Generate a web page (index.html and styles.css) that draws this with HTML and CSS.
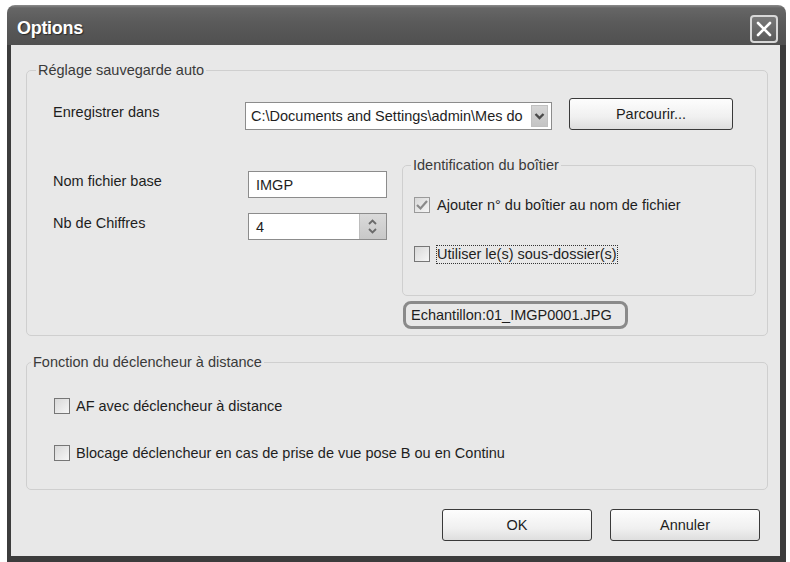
FILE: index.html
```html
<!DOCTYPE html>
<html lang="fr">
<head>
    <meta charset="UTF-8">
    <title>Options</title>
    <link rel="stylesheet" href="styles.css">
</head>
<body>
    <div class="window">
        <div class="titlebar">
            <span class="title">Options</span>
            <span class="close-btn">
                <svg width="20" height="20" viewBox="0 0 20 20"><path d="M4 4 L16 16 M16 4 L4 16" stroke="#fff" stroke-width="2.6" stroke-linecap="round"/></svg>
            </span>
        </div>

        <div class="client">
            <fieldset class="group group-save">
                <legend>Réglage sauvegarde auto</legend>
                <div class="save-body">
                    <div class="row-path">
                        <span class="lbl lbl-path">Enregistrer dans</span>
                        <div class="combo">
                            <span class="combo-text">C:\Documents and Settings\admin\Mes do</span>
                            <span class="combo-arrow">
                                <svg width="15" height="20" viewBox="0 0 15 20"><path d="M3.5 8 L7.5 12 L11.5 8" fill="none" stroke="#4a4a4a" stroke-width="2.4"/></svg>
                            </span>
                        </div>
                        <span class="btn btn-browse">Parcourir...</span>
                    </div>

                    <div class="row-split">
                        <div class="file-col">
                            <div class="field-row">
                                <span class="lbl lbl-field">Nom fichier base</span>
                                <div class="textbox">IMGP</div>
                            </div>
                            <div class="field-row">
                                <span class="lbl lbl-field">Nb de Chiffres</span>
                                <div class="textbox spin">
                                    <span class="spin-val">4</span>
                                    <span class="spin-btn">
                                        <svg width="25" height="25" viewBox="0 0 25 25"><path d="M9 10 L12.5 6.5 L16 10 M9 15 L12.5 18.5 L16 15" fill="none" stroke="#6a6a6a" stroke-width="1.8"/></svg>
                                    </span>
                                </div>
                            </div>
                        </div>

                        <div class="body-col">
                            <fieldset class="group group-body">
                                <legend>Identification du boîtier</legend>
                                <div class="body-checks">
                                    <div class="check-row">
                                        <span class="check checked">
                                            <svg width="14" height="14" viewBox="0 0 14 14"><path d="M2 7 L5.5 10.5 L12 3" fill="none" stroke="#8a8a8a" stroke-width="2.2"/></svg>
                                        </span>
                                        <span>Ajouter n° du boîtier au nom de fichier</span>
                                    </div>
                                    <div class="check-row row-sub">
                                        <span class="check"></span>
                                        <span class="focus">Utiliser le(s) sous-dossier(s)</span>
                                    </div>
                                </div>
                            </fieldset>
                            <div class="sample">Echantillon:01_IMGP0001.JPG</div>
                        </div>
                    </div>
                </div>
            </fieldset>

            <fieldset class="group group-remote">
                <legend>Fonction du déclencheur à distance</legend>
                <div class="remote-body">
                    <div class="check-row">
                        <span class="check"></span>
                        <span>AF avec déclencheur à distance</span>
                    </div>
                    <div class="check-row row-lock">
                        <span class="check"></span>
                        <span>Blocage déclencheur en cas de prise de vue pose B ou en Continu</span>
                    </div>
                </div>
            </fieldset>

            <div class="actions">
                <span class="btn btn-ok">OK</span>
                <span class="btn btn-cancel">Annuler</span>
            </div>
        </div>
    </div>
</body>
</html>
```

FILE: styles.css
```css
body {
    margin: 0;
    background: #fff;
    font-family: "Liberation Sans", Arial, sans-serif;
    font-size: 14.5px;
    color: #1e1e1e;
}
.window {
    margin: 5px 0 0 7px;
    width: 779px;
}
.titlebar {
    height: 40px;
    box-sizing: border-box;
    padding: 0 8px 0 10px;
    display: flex;
    justify-content: space-between;
    align-items: center;
    border-radius: 8px 8px 0 0;
    background: linear-gradient(#8c8c8c 0, #666 3px, #5a5a5a 45%, #505050 100%);
}
.title {
    color: #fff;
    font-weight: bold;
    font-size: 18px;
    letter-spacing: -0.3px;
    text-shadow: 1px 1px 1px #2a2a2a;
    margin-top: 6px;
}
.close-btn {
    width: 28px;
    height: 28px;
    box-sizing: border-box;
    margin-top: 8px;
    border: 2px solid #d8d8d8;
    border-radius: 4px;
    background: linear-gradient(#7a7a7a, #5a5a5a);
    display: flex;
    align-items: center;
    justify-content: center;
}
.client {
    background: #e8e8e8;
    border: 6px solid #3c3c3c;
    border-left-width: 4px;
    border-top: 0;
    padding: 17px 12px 15px 15px;
}
.group {
    margin: 0;
    padding: 0;
    border: 1px solid #cfcfcf;
    border-radius: 5px;
}
.group legend {
    padding: 0 2px;
    line-height: 16px;
    color: #3a3a3a;
}
.group-save legend {
    margin-left: 9px;
}
.save-body {
    padding: 20px 11px 6px 26px;
}
.row-path {
    display: flex;
    align-items: flex-end;
    height: 32px;
}
.lbl-path {
    width: 192px;
    align-self: center;
    margin-top: -4px;
}
.combo {
    width: 307px;
    height: 28px;
    box-sizing: border-box;
    border: 1px solid #8c8c8c;
    background: #fff;
    display: flex;
    align-items: center;
    justify-content: space-between;
    padding: 0 3px 0 5px;
}
.combo-arrow {
    width: 17px;
    height: 22px;
    background: linear-gradient(#d6d6d6, #c4c4c4);
    border: 1px solid #c0c0c0;
    box-sizing: border-box;
    display: flex;
    align-items: center;
    justify-content: center;
}
.btn {
    height: 32px;
    box-sizing: border-box;
    border: 1px solid #3a3a3a;
    border-radius: 3px;
    background: linear-gradient(#fdfdfd, #f0f0f0 60%, #dedede);
    display: flex;
    align-items: center;
    justify-content: center;
}
.btn-browse {
    width: 164px;
    margin-left: 17px;
}
.row-split {
    display: flex;
    align-items: flex-start;
    gap: 15px;
    margin-top: 27px;
}
.file-col {
    width: 334px;
    padding-top: 14px;
    display: flex;
    flex-direction: column;
    gap: 15px;
}
.field-row {
    display: flex;
    align-items: flex-start;
}
.lbl-field {
    width: 195px;
    line-height: 18px;
    padding-top: 1px;
}
.textbox {
    width: 139px;
    height: 27px;
    box-sizing: border-box;
    border: 1px solid #8c8c8c;
    background: #fff;
    padding: 0 7px;
    display: flex;
    align-items: center;
}
.spin {
    padding-right: 0;
    justify-content: space-between;
}
.spin-btn {
    width: 27px;
    height: 25px;
    background: linear-gradient(#dadada, #c8c8c8);
    border-left: 1px solid #bdbdbd;
    box-sizing: border-box;
}
.body-col {
    width: 354px;
}
.group-body legend {
    margin-left: 8px;
}
.body-checks {
    padding: 22px 8px 31px 11px;
}
.check-row {
    display: flex;
    align-items: center;
    height: 20px;
    gap: 7px;
}
.row-sub {
    margin-top: 29px;
}
.check {
    width: 16px;
    height: 16px;
    box-sizing: border-box;
    border: 1px solid #767676;
    background: linear-gradient(135deg, #d8d8d8, #f6f6f6);
    display: flex;
    align-items: center;
    justify-content: center;
    flex-shrink: 0;
}
.check.checked {
    border-color: #9a9a9a;
}
.focus {
    outline: 1px dotted #333;
    line-height: 17px;
}
.sample {
    display: inline-block;
    margin: 5px 0 0 1px;
    height: 28px;
    line-height: 22px;
    box-sizing: border-box;
    border: 3px solid #8a8a8a;
    border-radius: 8px;
    padding: 0 5px;
    width: 225px;
}
.group-remote {
    margin-top: 18px;
}
.group-remote legend {
    margin-left: 4px;
}
.remote-body {
    padding: 26px 0 26px 27px;
}
.remote-body .check-row {
    gap: 6px;
}
.row-lock {
    margin-top: 27px;
}
.actions {
    display: flex;
    justify-content: flex-end;
    gap: 18px;
    margin-top: 19px;
    padding-right: 8px;
}
.btn-ok, .btn-cancel {
    width: 150px;
}
```
